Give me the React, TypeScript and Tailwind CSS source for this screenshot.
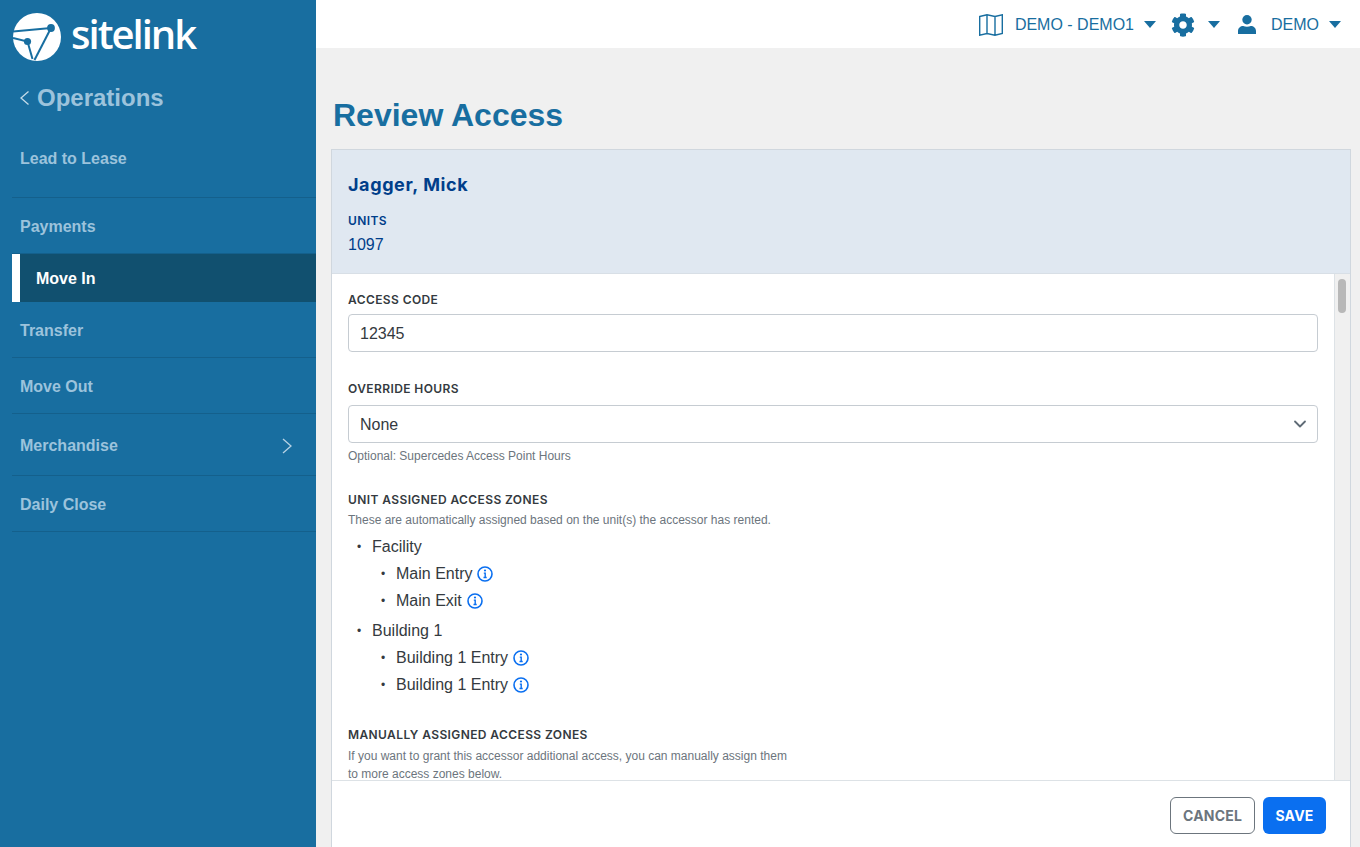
import type { ReactNode } from 'react';
import { ChevronDown } from 'lucide-react';
import { FaCog } from 'react-icons/fa';

const sans = "font-['Liberation_Sans',Arial,sans-serif]";
const head = "font-['Inter','Liberation_Sans',sans-serif]";

const Caret = () => (
  <svg width="12" height="7" viewBox="0 0 12 7" className="fill-[#186ea0]">
    <path d="M0 0h12L6 7z" />
  </svg>
);

const Info = () => (
  <svg width="16" height="16" viewBox="0 0 16 16" fill="none" className="ml-[5px] shrink-0">
    <circle cx="8" cy="8" r="7" stroke="#0a6ff0" strokeWidth="1.6" />
    <circle cx="8" cy="4.5" r="1.1" fill="#0a6ff0" />
    <path d="M6.8 7.1h1.4v4.3M6.5 11.5h3.2" stroke="#0a6ff0" strokeWidth="1.4" />
  </svg>
);

const Logo = () => (
  <svg width="48" height="48" viewBox="0 0 48 48" className="shrink-0">
    <circle cx="24" cy="24" r="24" fill="#fff" />
    <g stroke="#186ea0" strokeWidth="2" fill="none">
      <path d="M0 18.500 L38 15" />
      <path d="M0 25 L14.500 28.500 L19.500 46" />
      <path d="M38 15 L21.500 47" />
    </g>
    <circle cx="38" cy="15" r="3.900" fill="#186ea0" />
    <circle cx="14.500" cy="28.500" r="3.600" fill="#186ea0" />
  </svg>
);

const NavItem = ({ label, h, chevron }: { label: string; h: string; chevron?: boolean }) => (
  <div className={`${h} ml-3 flex items-center justify-between border-b border-[#14608c] pl-2 pr-[24px] text-base font-bold text-[#9cc3dc]`}>
    <span>{label}</span>
    {chevron && (
      <svg width="10" height="16" viewBox="0 0 10 16" fill="none" stroke="#b7d2e4" strokeWidth="1.3">
        <path d="M1 1l8 7-8 7" />
      </svg>
    )}
  </div>
);

const Sidebar = () => (
  <aside className={`${sans} flex w-[316px] shrink-0 flex-col bg-[#186ea0]`}>
    <div className="flex h-[73px] items-start pl-[13px] pt-[13px]">
      <Logo />
      <span className="ml-[10px] mt-[-3px] text-[40px] font-semibold leading-[48px] tracking-[-2px] text-white font-['Open_Sans',sans-serif]">sitelink</span>
    </div>
    <div className="flex h-[50px] items-center pl-[20px] text-[24px] font-bold text-[#9cc3dc]">
      <svg width="9" height="14" viewBox="0 0 9 14" fill="none" stroke="#c4dbe9" strokeWidth="1.3" className="mr-[8px]">
        <path d="M8.500 .500L1 7l7.500 6.500" />
      </svg>
      <span>Operations</span>
    </div>
    <NavItem label="Lead to Lease" h="h-[75px] pb-[2px]" />
    <NavItem label="Payments" h="h-[56px] pt-[2px]" />
    <div className="ml-3 flex h-[48px] items-center border-l-[8px] border-white bg-[#11506f] pl-4 pt-[2px] text-base font-bold text-white">Move In</div>
    <NavItem label="Transfer" h="h-[56px] pt-[2px]" />
    <NavItem label="Move Out" h="h-[56px] pt-[2px]" />
    <NavItem label="Merchandise" h="h-[62px] pt-[2px]" chevron />
    <NavItem label="Daily Close" h="h-[56px] pt-[2px]" />
  </aside>
);

const TopBar = () => (
  <header className={`${sans} flex h-[48px] shrink-0 items-center justify-end bg-white pt-[1px] text-base text-[#186ea0]`}>
    <svg width="24" height="22" viewBox="0 0 24 22" fill="none" stroke="#186ea0" strokeWidth="1.4">
      <path d="M.700 2.500 L8 .800 L16 2.500 L23.300 .800 V19.500 L16 21.200 L8 19.500 L.700 21.200 Z M8 .800 V19.500 M16 2.500 V21.200" />
    </svg>
    <span className="ml-[12px]">DEMO - DEMO1</span>
    <span className="ml-[10px]"><Caret /></span>
    <FaCog size={24} className="ml-[15px]" />
    <span className="ml-[13px]"><Caret /></span>
    <svg width="18" height="19" viewBox="0 0 18 19" className="ml-[18px] fill-[#186ea0]">
      <circle cx="9" cy="4.800" r="4.700" />
      <path d="M0 19v-3c0-3 2.500-5 5.200-5 1.100.500 2.400.800 3.800.800s2.700-.300 3.800-.800c2.700 0 5.200 2 5.200 5v3z" />
    </svg>
    <span className="ml-[15px]">DEMO</span>
    <span className="ml-[10px] mr-[19px]"><Caret /></span>
  </header>
);

const FieldLabel = ({ children }: { children: string }) => (
  <div className={`${head} text-[12px] font-semibold leading-[16px] tracking-[0.4px] text-[#343a40]`}>{children}</div>
);

const Hint = ({ children }: { children: ReactNode }) => (
  <div className="text-[12px] leading-[18px] text-[#6c757d]">{children}</div>
);

const Zone = ({ label, info }: { label: string; info?: boolean }) => (
  <li className="flex h-[27px] items-center">
    <span className="w-[24px] pl-[9px] text-[12px]">•</span>
    <span>{label}</span>
    {info && <Info />}
  </li>
);

export default function App() {
  return (
    <div className="flex h-[847px] w-[1360px] overflow-hidden bg-[#f0f0f0]">
      <Sidebar />
      <main className="flex min-w-0 flex-1 flex-col">
        <TopBar />
        <h1 className={`${sans} mb-[15px] ml-[17px] mt-[48px] text-[32px] font-bold leading-[38px] text-[#186ea0]`}>Review Access</h1>
        <section className={`${sans} ml-[15px] mr-[9px] flex min-h-0 flex-1 flex-col border border-[#d0d7de] border-b-0 bg-white`}>
          <div className="h-[124px] shrink-0 border-b border-[#d8dfe6] bg-[#e0e8f1] pl-4 pt-[24px] text-[#003e8a]">
            <div className={`${head} text-[18px] font-bold leading-[22px] tracking-[0.6px]`}>Jagger, Mick</div>
            <div className={`${head} mt-[17px] text-[12px] font-semibold leading-[16px] tracking-[0.4px]`}>UNITS</div>
            <div className="mt-[6px] text-base leading-[20px]">1097</div>
          </div>
          <div className="flex min-h-0 flex-1">
            <div className="min-w-0 flex-1 overflow-hidden pl-4 pr-[16px] pt-[18px] text-[#343a40]">
              <FieldLabel>ACCESS CODE</FieldLabel>
              <div className="mt-[6px] flex h-[38px] items-center rounded border border-[#c6ccd2] px-[11px] pt-[2px] text-base">12345</div>
              <div className="mt-[29px]"><FieldLabel>OVERRIDE HOURS</FieldLabel></div>
              <div className="mt-[8px] flex h-[38px] items-center justify-between rounded border border-[#c6ccd2] pl-[11px] pr-[7px] text-base">
                <span className="pt-[2px]">None</span>
                <ChevronDown size={20} strokeWidth={2.2} className="text-[#5f6b76]" />
              </div>
              <div className="mt-[4px]"><Hint>Optional: Supercedes Access Point Hours</Hint></div>
              <div className="mt-[27px]"><FieldLabel>UNIT ASSIGNED ACCESS ZONES</FieldLabel></div>
              <div className="mt-[3px]"><Hint>These are automatically assigned based on the unit(s) the accessor has rented.</Hint></div>
              <ul className="mt-[4px] text-base text-[#343a40]">
                <Zone label="Facility" />
                <ul className="ml-[24px]">
                  <Zone label="Main Entry" info />
                  <Zone label="Main Exit" info />
                </ul>
                <div className="mt-[3px]"><Zone label="Building 1" /></div>
                <ul className="ml-[24px]">
                  <Zone label="Building 1 Entry" info />
                  <Zone label="Building 1 Entry" info />
                </ul>
              </ul>
              <div className="mt-[29px]"><FieldLabel>MANUALLY ASSIGNED ACCESS ZONES</FieldLabel></div>
              <div className="mt-[4px] w-[444px]"><Hint>If you want to grant this accessor additional access, you can manually assign them to more access zones below.</Hint></div>
            </div>
            <div className="w-[16px] shrink-0 border-l border-[#dde2e6] bg-[#f0f0f0] pl-[3px] pt-[5px]">
              <div className="h-[34px] w-[8px] rounded bg-[#b8b8b8]" />
            </div>
          </div>
          <div className={`${head} flex h-[67px] shrink-0 items-start justify-end gap-2 border-t border-[#dde2e6] bg-white pr-[24px] pt-4`}>
            <button className="h-[37px] w-[85px] rounded-md border border-[#6c757d] text-[14px] font-bold tracking-[0.2px] text-[#6c757d]">CANCEL</button>
            <button className="h-[37px] w-[63px] rounded-md bg-[#0a6ff0] text-[14px] font-bold tracking-[0.2px] text-white">SAVE</button>
          </div>
        </section>
      </main>
    </div>
  );
}
